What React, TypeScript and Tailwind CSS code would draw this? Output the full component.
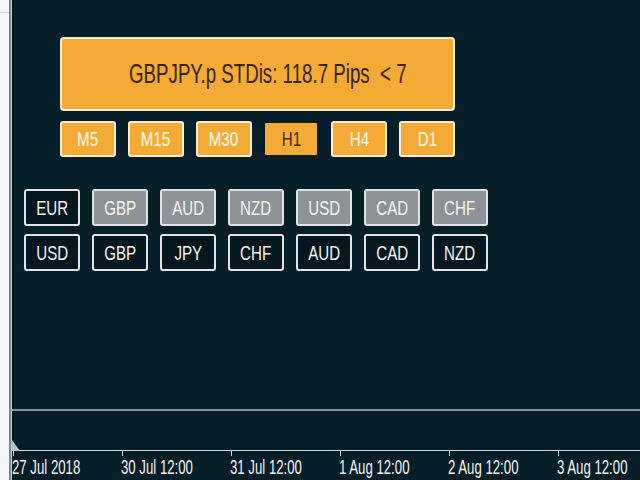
import React from 'react';

const timeframes = ['M5', 'M15', 'M30', 'H1', 'H4', 'D1'];
const baseRow = [
  { name: 'EUR', on: false },
  { name: 'GBP', on: true },
  { name: 'AUD', on: true },
  { name: 'NZD', on: true },
  { name: 'USD', on: true },
  { name: 'CAD', on: true },
  { name: 'CHF', on: true },
];
const quoteRow = ['USD', 'GBP', 'JPY', 'CHF', 'AUD', 'CAD', 'NZD'];
const axisLabels = ['27 Jul 2018', '30 Jul 12:00', '31 Jul 12:00', '1 Aug 12:00', '2 Aug 12:00', '3 Aug 12:00'];

const narrow = "inline-block scale-x-[0.72] whitespace-pre";
const font = { fontFamily: '"Liberation Sans", Arial, sans-serif' };

export default function App() {
  const active = 'H1';

  return (
    <div className="w-[640px] h-[480px] flex bg-[#061e28] overflow-hidden" style={font}>
      {/* window frame strip on the left */}
      <div className="w-[9px] shrink-0 bg-[#f3f5f6] flex flex-col">
        <div className="h-[12px]" />
        <div className="h-[1px] bg-[#c9cfd3]" />
      </div>
      <div className="w-[2px] shrink-0 bg-[#7e8990]" />

      <div className="flex-1 min-w-0 overflow-hidden flex flex-col border-l border-[#c3c9cd] relative">
        {/* chart area */}
        <div className="h-[451px] flex flex-col">
          <div className="pt-[37px] pl-[48px]">
            {/* spread panel */}
            <div className="w-[395px] h-[74px] bg-[#f4ab36] border-2 border-[#fbeed6] rounded-[4px] flex items-center justify-center pl-[20px]">
              <span className="inline-block scale-x-[0.72] scale-y-[1.05] whitespace-pre text-[26px] text-[#3a2408]">GBPJPY.p STDis: 118.7 Pips  &lt; 7</span>
            </div>

            {/* timeframe buttons */}
            <div className="w-[395px] mt-[10px] flex justify-between">
              {timeframes.map(tf => (
                <div
                  key={tf}
                  className={`w-[56px] h-[36px] rounded-[3px] bg-[#f4ab36] border-2 flex items-center justify-center ${tf === active ? 'border-[#0b1a20] text-[#3a2a10]' : 'border-[#fbeed6] text-[#fffaf0]'}`}
                >
                  <span className={`${narrow} text-[21px]`}>{tf}</span>
                </div>
              ))}
            </div>
          </div>

          {/* currency buttons */}
          <div className="pl-[12px] mt-[32px] flex flex-col gap-[8px]">
            <div className="flex gap-[12px]">
              {baseRow.map(c => (
                <div
                  key={c.name}
                  className={`w-[56px] h-[37px] rounded-[3px] border-2 border-[#dfe3e6] flex items-center justify-center text-[#f4f4f4] ${c.on ? 'bg-[#8d9297]' : 'bg-[#04161e]'}`}
                >
                  <span className={`${narrow} text-[21px]`}>{c.name}</span>
                </div>
              ))}
            </div>
            <div className="flex gap-[12px]">
              {quoteRow.map((q, i) => (
                <div
                  key={i}
                  className="w-[56px] h-[37px] rounded-[3px] border-2 border-[#dfe3e6] bg-[#04161e] flex items-center justify-center text-[#f4f4f4]"
                >
                  <span className={`${narrow} text-[21px]`}>{q}</span>
                </div>
              ))}
            </div>
          </div>

          <div className="flex-1" />
          <div className="h-[2px] bg-[#8a9196]" />
          <div className="h-[39px]" />
          <div className="h-[1px] bg-[#cfd4d8]" />
        </div>

        {/* time axis */}
        <div className="flex-1 flex">
          {axisLabels.map(l => (
            <div key={l} className="w-[109px] shrink-0 flex flex-col">
              <div className="w-[1px] h-[5px] bg-[#cfd4d8] ml-[1px]" />
              <span className="inline-block scale-x-[0.66] origin-left whitespace-pre text-[20px] leading-[22px] text-[#f2f2f2]">{l}</span>
            </div>
          ))}
        </div>

        {/* corner marker */}
        <svg className="absolute left-0 top-[440px]" width="8" height="11" viewBox="0 0 8 11">
          <polygon points="0,0 8,11 0,11" fill="#b9c2cc" />
        </svg>
      </div>
    </div>
  );
}
